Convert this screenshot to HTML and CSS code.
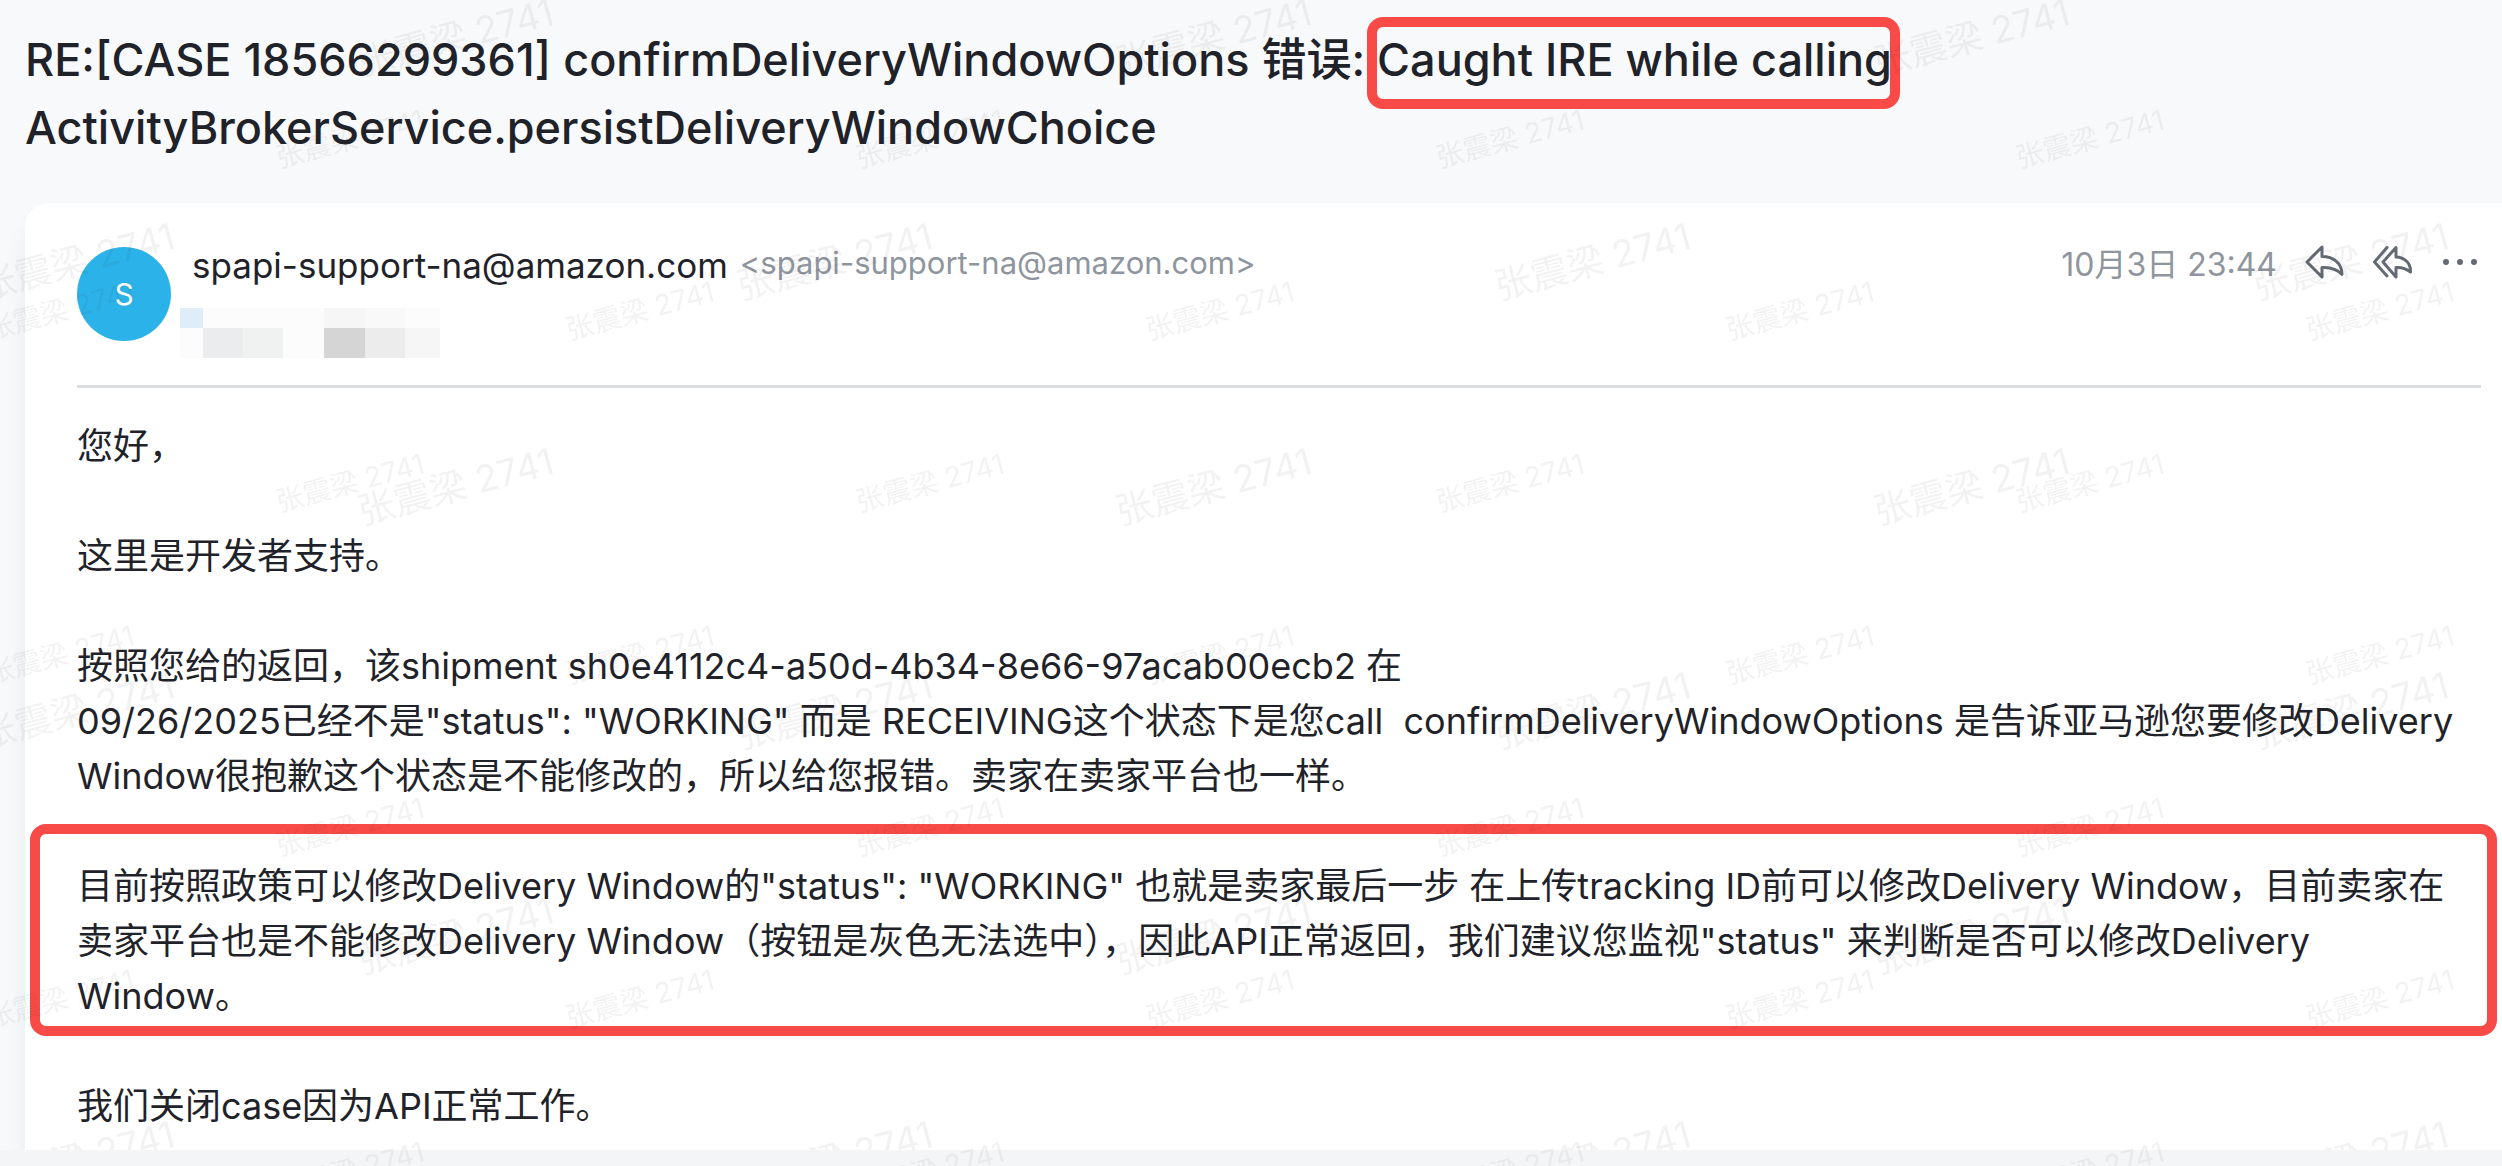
FILE: index.html
```html
<!DOCTYPE html>
<html lang="zh-CN">
<head>
<meta charset="utf-8">
<meta name="viewport" content="width=device-width, initial-scale=1">
<title>RE:[CASE 18566299361]</title>
<link rel="stylesheet" href="styles.css">
</head>
<body>
<main class="mail">
  <h1 class="subject">RE:[CASE 18566299361] confirmDeliveryWindowOptions 错误: <span class="mark mark-inline">Caught IRE while calling</span> ActivityBrokerService.persistDeliveryWindowChoice</h1>
  <article class="card">
    <header class="card-head">
      <div class="avatar" aria-hidden="true">S</div>
      <div class="sender">
        <div class="sender-line">
          <span class="sender-name">spapi-support-na@amazon.com</span>
          <span class="sender-mail">&lt;spapi-support-na@amazon.com&gt;</span>
        </div>
        <div class="recipient" aria-hidden="true">
          <i class="px c1"></i><i class="px c2"></i><i class="px c2"></i><i class="px c2"></i><i class="px c3"></i><i class="px c4"></i><i class="px c2"></i>
          <i class="px c2"></i><i class="px c5"></i><i class="px c6"></i><i class="px c2"></i><i class="px c7"></i><i class="px c8"></i><i class="px c3"></i>
        </div>
      </div>
      <div class="tools">
        <time class="date" datetime="2025-10-03T23:44">10月3日 23:44</time>
        <button class="tool" type="button" aria-label="回复">
          <svg width="40" height="40" viewBox="0 0 40 40"><path d="M17 5 2 20 17 35V25.500C25 25 32 27 37 32.500C37 21 28 14.500 17 14.500Z"/></svg>
        </button>
        <button class="tool" type="button" aria-label="回复全部">
          <svg width="40" height="40" viewBox="0 0 40 40"><path d="M14 5.500 1.500 20 14 34"/><path d="M23 5.500 10 20 23 35V25.500C29 25 33 26.500 37.500 30C38 21.500 31.500 15 23 15Z"/></svg>
        </button>
        <button class="tool" type="button" aria-label="更多">
          <svg class="dots" width="40" height="40" viewBox="0 0 40 40"><circle cx="5" cy="20" r="3"/><circle cx="19" cy="20" r="3"/><circle cx="33" cy="20" r="3"/></svg>
        </button>
      </div>
    </header>
    <div class="body">
      <p>您好，</p>
      <p>这里是开发者支持。</p>
      <p>按照您给的返回，该shipment sh0e4112c4-a50d-4b34-8e66-97acab00ecb2 在<br>09/26/2025已经不是"status": "WORKING" 而是 RECEIVING这个状态下是您call&nbsp; confirmDeliveryWindowOptions 是告诉亚马逊您要修改Delivery Window很抱歉这个状态是不能修改的，所以给您报错。卖家在卖家平台也一样。</p>
      <p class="mark mark-block">目前按照政策可以修改Delivery Window的"status": "WORKING" 也就是卖家最后一步 在上传tracking ID前可以修改Delivery Window，目前卖家在卖家平台也是不能修改Delivery Window（按钮是灰色无法选中），因此API正常返回，我们建议您监视"status" 来判断是否可以修改Delivery Window。</p>
      <p>我们关闭case因为API正常工作。</p>
    </div>
  </article>
  <svg class="watermark" aria-hidden="true">
    <defs>
      <pattern id="wm-large" patternUnits="userSpaceOnUse" x="330" y="-10" width="758" height="449">
        <text class="wm-large" transform="translate(32 86) rotate(-15)">张震梁 2741</text>
        <text class="wm-large" transform="translate(411 310) rotate(-15)">张震梁 2741</text>
      </pattern>
    </defs>
    <rect width="100%" height="100%" fill="url(#wm-large)"/>
  </svg>
</main>
<svg class="watermark" aria-hidden="true">
  <defs>
    <pattern id="wm-small" patternUnits="userSpaceOnUse" x="205" y="100" width="580" height="344">
      <text class="wm-small" transform="translate(74 68) rotate(-15)">张震梁 2741</text>
      <text class="wm-small" transform="translate(364 240) rotate(-15)">张震梁 2741</text>
    </pattern>
  </defs>
  <rect width="100%" height="100%" fill="url(#wm-small)"/>
</svg>
</body>
</html>
```
FILE: styles.css
```css
* {
  box-sizing: border-box;
}

body {
  margin: 0;
  padding-bottom: 16px;
  position: relative;
  background: #f4f5f7;
  color: #1f2329;
  font-family: Inter, "Noto Sans CJK SC", sans-serif;
}

.mail {
  position: relative;
  padding: 26px 0 0 25px;
  overflow: hidden;
  background: #f8f9fb;
}

.subject {
  margin: 0;
  padding-right: 24px;
  font-size: 45px;
  line-height: 68px;
  font-weight: 500;
}

.card {
  margin-top: 41px;
  padding: 44px 21px 16px 52px;
  border-radius: 24px 0 0 0;
  background: #fff;
  box-shadow: 0 20px 24px rgba(31, 35, 41, 0.06);
}

.card-head {
  display: flex;
  align-items: flex-start;
  height: 141px;
  border-bottom: 3px solid #dcdddf;
}

.avatar {
  display: grid;
  place-items: center;
  width: 94px;
  height: 94px;
  border-radius: 50%;
  background: #2bb2e8;
  color: #fff;
  font-size: 30px;
}

.sender {
  flex: 1;
  margin-left: 9px;
}

.sender-line {
  display: flex;
  align-items: flex-start;
  gap: 12px;
  height: 36px;
  padding-left: 12px;
  white-space: nowrap;
}

.sender-name {
  font-size: 35px;
  line-height: 36px;
}

.sender-mail {
  color: #8f959e;
  font-size: 31px;
  line-height: 32px;
}

.recipient {
  display: grid;
  grid-template-columns: 23px 40px 40px 41px 41px 40px 35px;
  grid-template-rows: 20px 30px;
  margin-top: 25px;
}

.c1 { background: #deedf8; }
.c2 { background: #fcfcfc; }
.c3 { background: #f6f6f6; }
.c4 { background: #f9f9f9; }
.c5 { background: #ebecee; }
.c6 { background: #f0f2f2; }
.c7 { background: #d5d5d5; }
.c8 { background: #ececec; }

.tools {
  display: flex;
  align-items: center;
  gap: 28px;
  height: 30px;
}

.date {
  color: #8f959e;
  font-size: 32px;
}

.tool {
  display: block;
  width: 40px;
  height: 40px;
  padding: 0;
  border: 0;
  background: none;
}

.tool svg {
  display: block;
  fill: none;
  stroke: #646a73;
  stroke-width: 3;
  stroke-linejoin: round;
  stroke-linecap: round;
}

.tool .dots {
  fill: #646a73;
  stroke: none;
}

.body {
  padding: 31px 8px 0 0;
  font-size: 36px;
  line-height: 55px;
}

.body p {
  margin: 0 0 55px;
}

.body p:last-child {
  margin-bottom: 0;
}

.mark {
  position: relative;
}

.mark::after {
  content: "";
  position: absolute;
  border: 10px solid #f84a46;
  border-radius: 16px;
  pointer-events: none;
}

.mark-inline::after {
  inset: -15px -8px -22px -10px;
}

.mark-block::after {
  inset: -35px -24px -12px -47px;
}

.watermark {
  position: absolute;
  inset: 0;
  width: 100%;
  height: 100%;
  pointer-events: none;
}

.watermark text {
  fill: #1f2329;
  fill-opacity: 0.06;
}

.wm-large {
  font-size: 37px;
}

.wm-small {
  font-size: 28px;
}
```
